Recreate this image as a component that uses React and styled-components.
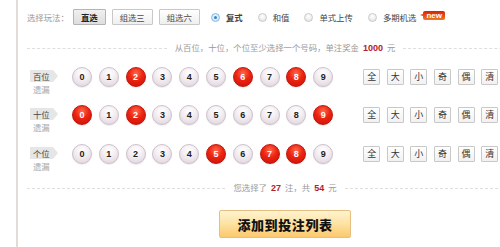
import React from 'react'
import styled, { createGlobalStyle, css } from 'styled-components'

const cjk = `"Noto Sans CJK SC", "Liberation Sans", sans-serif`
const latin = `"Liberation Sans", Arial, sans-serif`

const Global = createGlobalStyle`
html, body {
  margin: 0;
  padding: 0;
  background: #fff;
  overflow: hidden;
}
body {
  font-family: ${cjk};
}
`

// the panel is wider than the window: its right side is cut off, as in the shot
const Page = styled.div`
width: 500px;
height: 247px;
padding-left: 16px;
box-sizing: border-box;
overflow: hidden;
`
const Panel = styled.div`
width: 527px;
height: 247px;
box-sizing: border-box;
border-left: 2px solid #e2dbd6;
padding: 9px 0 0 9px;
`
const Toolbar = styled.div`
display: flex;
align-items: center;
height: 16px;
`
const ToolLabel = styled.span`
font-size: 8.4px;
color: #999;
margin-right: 4px;
line-height: 1;
`
const PlayButton = styled.button`
height: 16px;
box-sizing: border-box;
padding: 0 7px;
margin-right: 6px;
font-family: ${cjk};
font-size: 8.4px;
line-height: 14px;
color: #4a4a4a;
border: 1px solid #c8c8c8;
border-radius: 1px;
background: linear-gradient(#ffffff, #efefef);
${p => p.$active && css`
  font-weight: bold;
  color: #222;
  border-color: #b4b4b4;
  background: linear-gradient(#f0f0f0, #dedede);
`}
`
const Radios = styled.div`
display: flex;
align-items: center;
margin-left: 5px;
`
const RadioItem = styled.label`
display: flex;
align-items: center;
margin-right: 15px;
font-size: 8.4px;
color: #444;
line-height: 1;
font-weight: ${p => (p.$checked ? 'bold' : 'normal')};
`
const RadioDot = styled.span`
width: 9px;
height: 9px;
box-sizing: border-box;
border-radius: 50%;
margin-right: 6px;
border: 1px solid #cacaca;
background: radial-gradient(circle at 50% 35%, #ffffff 0%, #eeeeee 55%, #d6d6d6 100%);
position: relative;
${p => p.$checked && css`
  border-color: #86b8e0;
  background: radial-gradient(circle at 50% 40%, #eaf5fd 0%, #c7e2f7 100%);
  &::after {
    content: '';
    position: absolute;
    left: 2px;
    top: 2px;
    width: 3px;
    height: 3px;
    border-radius: 50%;
    background: #2f86cf;
  }
`}
`
const NewBadge = styled.span`
position: relative;
margin-left: -8px;
margin-top: -3px;
padding: 0 3px;
height: 9px;
line-height: 9px;
font-family: ${latin};
font-size: 8px;
font-weight: bold;
color: #fff;
border-radius: 2px;
background: linear-gradient(#d8200c, #f07a1c);
&::before {
  content: '';
  position: absolute;
  left: -3px;
  top: 3px;
  border-right: 3px solid #e2400f;
  border-top: 1.5px solid transparent;
  border-bottom: 1.5px solid transparent;
}
`
const Divider = styled.div`
display: flex;
align-items: center;
height: 12px;
margin-top: ${p => p.$top}px;
&::before, &::after {
  content: '';
  flex: 1;
  border-top: 1px dashed #dedede;
}
`
const DividerText = styled.span`
font-size: 8.4px;
color: #999;
padding: 0 8px;
line-height: 1;
white-space: nowrap;
`
const Strong = styled.b`
font-family: ${latin};
font-size: 9px;
color: #b3202c;
margin: 0 4px;
`
const Rows = styled.div`
margin-top: 3.5px;
`
const Row = styled.div`
display: flex;
align-items: center;
height: 38.5px;
`
const LabelCol = styled.div`
width: 45px;
align-self: flex-start;
margin-top: 12px;
padding-left: 3px;
box-sizing: border-box;
font-size: 8.4px;
line-height: 12px;
`
const Tag = styled.div`
position: relative;
width: fit-content;
height: 12px;
line-height: 12px;
padding: 0 3px;
color: #444;
background: #e6e6e6;
&::after {
  content: '';
  position: absolute;
  right: -5px;
  top: 0;
  border-left: 5px solid #e6e6e6;
  border-top: 6px solid transparent;
  border-bottom: 6px solid transparent;
}
`
const Miss = styled.div`
padding-left: 3px;
margin-top: 1px;
color: #aaa;
`
const Balls = styled.div`
display: flex;
gap: 6.8px;
`
const Ball = styled.span`
width: 20px;
height: 20px;
box-sizing: border-box;
border-radius: 50%;
display: flex;
align-items: center;
justify-content: center;
font-family: ${latin};
font-size: 9px;
font-weight: bold;
color: #222;
border: 1px solid #cdbfca;
background: radial-gradient(circle at 50% 30%, #ffffff 0%, #f4eff3 40%, #ddd0da 100%);
box-shadow: 0 1px 1px rgba(0, 0, 0, 0.08);
${p => p.$on && css`
  color: #fff;
  border-color: #bf150a;
  background: radial-gradient(circle at 50% 30%, #ff6a4e 0%, #ec2410 45%, #c4100a 100%);
`}
`
const QuickBar = styled.div`
display: flex;
gap: 6.6px;
margin-left: 30px;
`
const Quick = styled.button`
width: 17px;
height: 16px;
padding: 0;
box-sizing: border-box;
font-family: ${cjk};
font-size: 9px;
line-height: 14px;
color: #333;
border: 1px solid #c8c8c8;
border-radius: 1px;
background: linear-gradient(#ffffff, #f1f1f1);
`
const SubmitWrap = styled.div`
display: flex;
justify-content: center;
margin-top: 16px;
`
const Submit = styled.button`
width: 132px;
height: 28px;
padding: 0;
font-family: ${cjk};
font-size: 13px;
font-weight: 900;
letter-spacing: 0.6px;
color: #111;
border: 1px solid #e6bf80;
border-radius: 2px;
background: linear-gradient(#fff3cf, #fde2a2 50%, #fcc86c);
`

const rows = [
  { name: '百位', picked: [2, 6, 8] },
  { name: '十位', picked: [0, 2, 9] },
  { name: '个位', picked: [5, 7, 8] },
]
const quick = ['全', '大', '小', '奇', '偶', '清']
const plays = ['直选', '组选三', '组选六']
const modes = ['复式', '和值', '单式上传', '多期机选']

const App = () => {
  const count = rows.reduce((n, r) => n * r.picked.length, 1)
  return (
    <Page>
      <Global />
      <Panel>
        <Toolbar>
          <ToolLabel>选择玩法：</ToolLabel>
          {plays.map((p, i) => (
            <PlayButton key={p} $active={i === 0}>{p}</PlayButton>
          ))}
          <Radios>
            {modes.map((m, i) => (
              <RadioItem key={m} $checked={i === 0}>
                <RadioDot $checked={i === 0} />
                {m}
              </RadioItem>
            ))}
            <NewBadge>new</NewBadge>
          </Radios>
        </Toolbar>

        <Divider $top={17}>
          <DividerText>
            从百位，十位，个位至少选择一个号码，单注奖金<Strong>1000</Strong>元
          </DividerText>
        </Divider>

        <Rows>
          {rows.map(r => (
            <Row key={r.name}>
              <LabelCol>
                <Tag>{r.name}</Tag>
                <Miss>遗漏</Miss>
              </LabelCol>
              <Balls>
                {Array.from({ length: 10 }, (_, n) => (
                  <Ball key={n} $on={r.picked.includes(n)}>{n}</Ball>
                ))}
              </Balls>
              <QuickBar>
                {quick.map(q => <Quick key={q}>{q}</Quick>)}
              </QuickBar>
            </Row>
          ))}
        </Rows>

        <Divider $top={9}>
          <DividerText>
            您选择了<Strong>{count}</Strong>注，共<Strong>{count * 2}</Strong>元
          </DividerText>
        </Divider>

        <SubmitWrap>
          <Submit>添加到投注列表</Submit>
        </SubmitWrap>
      </Panel>
    </Page>
  )
}

export default App
